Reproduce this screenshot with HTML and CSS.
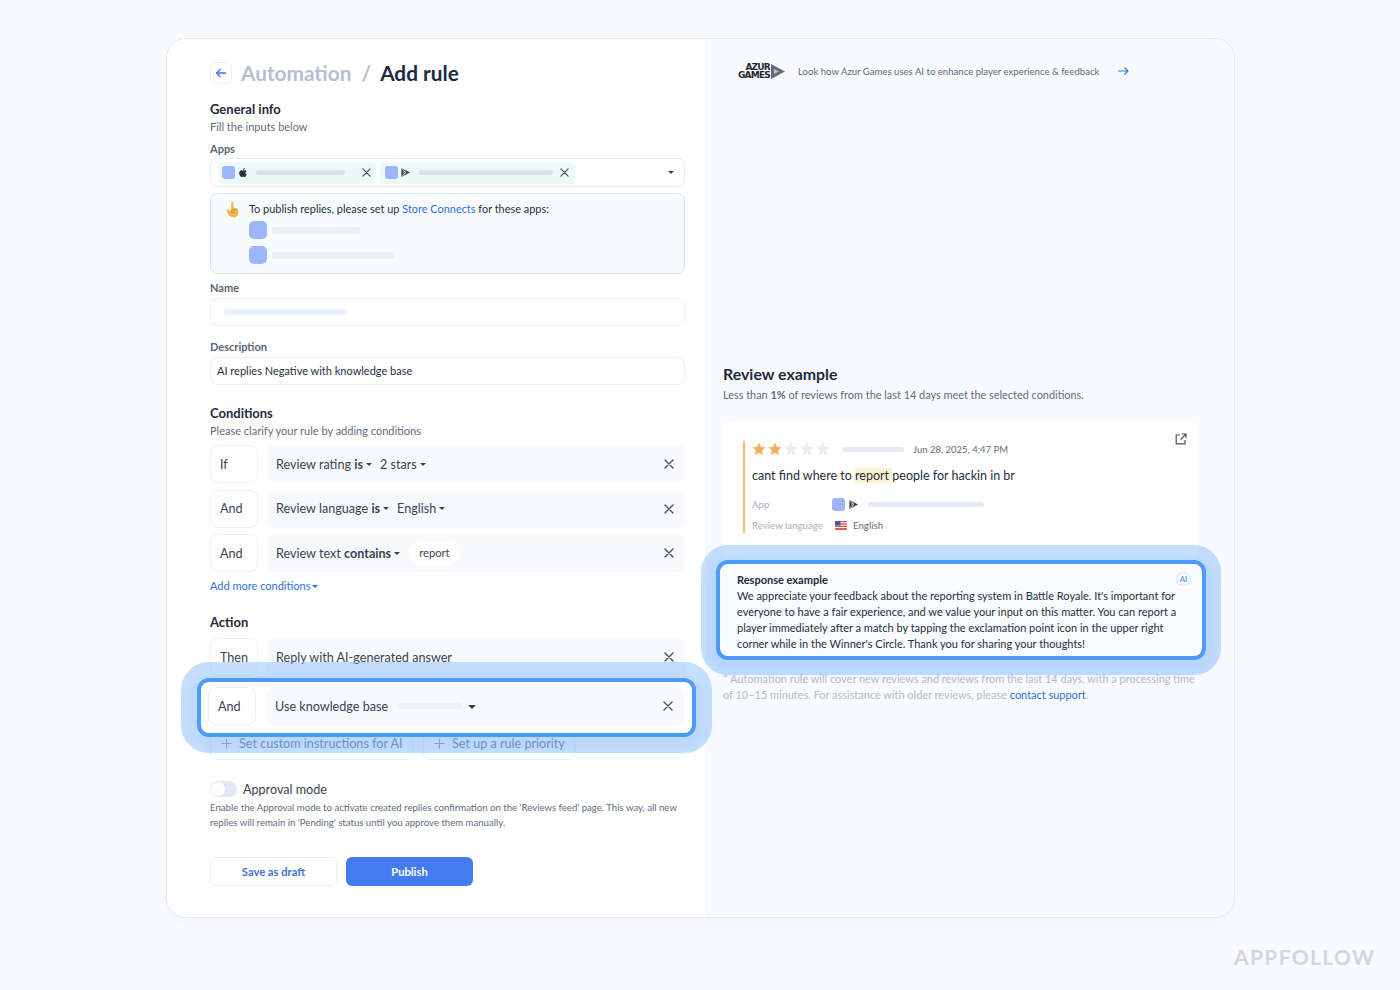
FILE: index.html
```html
<!DOCTYPE html>
<html lang="en">
<head>
<meta charset="utf-8">
<title>Add rule</title>
<link rel="stylesheet" href="styles.css">
</head>
<body>
<svg class="defs" width="0" height="0" aria-hidden="true">
  <symbol id="x" viewBox="0 0 10 10"><path d="M1 1l8 8M9 1l-8 8" fill="none" stroke="currentColor" stroke-width="1.4" stroke-linecap="round"/></symbol>
  <symbol id="star" viewBox="0 0 14 14"><path d="M7 .6l1.95 4.2 4.55.55-3.35 3.1.88 4.5L7 10.7l-4.03 2.25.88-4.5L.5 5.35l4.55-.55z" fill="currentColor"/></symbol>
  <symbol id="play" viewBox="0 0 12 12"><path d="M1.5 1l9.5 5-9.5 5z" fill="#3b4250"/><path d="M1.8 1.4L6.6 6l-4.8 4.6M5.2 4.2L4 6l1.2 1.8" fill="none" stroke="#fff" stroke-width=".8"/></symbol>
  <symbol id="plus" viewBox="0 0 12 12"><path d="M6 .5v11M.5 6h11" fill="none" stroke="currentColor" stroke-width="1.2"/></symbol>
</svg>
<main class="card">
  <section class="left">
    <header class="title">
      <button class="back"><svg width="12" height="12" viewBox="0 0 12 12"><path d="M11 6H1.5M5.5 2L1.5 6l4 4" fill="none" stroke="#3f78e0" stroke-width="1.3"/></svg></button>
      <h1><span class="muted">Automation</span><span class="muted slash">/</span>Add rule</h1>
    </header>
    <h2 class="h-general">General info</h2>
    <p class="sub sub-general">Fill the inputs below</p>
    <label class="lab lab-apps">Apps</label>
    <div class="select">
      <div class="chip chip-a">
        <i class="ico"></i>
        <svg class="apple" width="10" height="11" viewBox="2 2 20 20"><path d="M17.05 20.28c-.98.95-2.05.8-3.08.35-1.09-.46-2.09-.48-3.24 0-1.44.62-2.2.44-3.06-.35C2.79 15.25 3.51 7.59 9.05 7.31c1.35.07 2.29.74 3.08.8 1.18-.24 2.31-.93 3.57-.84 1.51.12 2.65.72 3.4 1.8-3.12 1.87-2.38 5.98.48 7.13-.57 1.5-1.31 2.99-2.54 4.09zM12.03 7.25c-.15-2.23 1.66-4.07 3.74-4.25.29 2.58-2.34 4.5-3.74 4.25z" fill="#2c3240"/></svg>
        <i class="cbar cbar-a"></i>
        <svg class="xi xi-a"><use href="#x"/></svg>
      </div>
      <div class="chip chip-b">
        <i class="ico"></i>
        <svg class="pl"><use href="#play"/></svg>
        <i class="cbar cbar-b"></i>
        <svg class="xi xi-b"><use href="#x"/></svg>
      </div>
      <i class="caret caret-sel"></i>
    </div>
    <div class="notice">
      <svg class="hand" width="14" height="17" viewBox="0 0 14 17"><path d="M6.2 1.4C6.3.3 8.2.3 8.3 1.4l.2 5.3 2.2.3c1.7.2 2.6 1.3 2.5 3l-.2 2.7c-.2 2.2-1.9 3.7-4.3 3.7-2.7 0-4.7-1.3-5.7-3.8L1.6 9.4c-.4-1 .9-1.7 1.6-.9l1.3 1.5 1.5-.8z" fill="#f1b543"/><path d="M5.8 9.4c1.5-.8 3.9-.8 5.4 0M6 11.5c1.1-.6 2.6-.6 3.8-.2" fill="none" stroke="#c0821c" stroke-width=".7"/></svg>
      <div class="notice-body">
        <p class="notice-text">To publish replies, please set up <a class="link">Store Connects</a> for these apps:</p>
        <div class="nrow"><i class="nico"></i><i class="nbar nbar-a"></i></div>
        <div class="nrow nrow-2"><i class="nico"></i><i class="nbar nbar-b"></i></div>
      </div>
    </div>
    <label class="lab lab-name">Name</label>
    <div class="input"><i class="name-bar"></i></div>
    <label class="lab lab-desc">Description</label>
    <div class="input input-text">AI replies Negative with knowledge base</div>

    <h2 class="h-cond">Conditions</h2>
    <p class="sub sub-cond">Please clarify your rule by adding conditions</p>
    <div class="rules">
      <div class="rule"><div class="tag">If</div><div class="rbar"><span>Review rating <b>is</b></span><i class="caret"></i><span class="val">2 stars</span><i class="caret"></i><svg class="rx"><use href="#x"/></svg></div></div>
      <div class="rule"><div class="tag">And</div><div class="rbar"><span>Review language <b>is</b></span><i class="caret"></i><span class="val">English</span><i class="caret"></i><svg class="rx"><use href="#x"/></svg></div></div>
      <div class="rule"><div class="tag">And</div><div class="rbar"><span>Review text <b>contains</b></span><i class="caret"></i><span class="pill">report</span><svg class="rx"><use href="#x"/></svg></div></div>
    </div>
    <a class="more link">Add more conditions<i class="caret caret-blue"></i></a>

    <h2 class="h-action">Action</h2>
    <div class="rule rule-then"><div class="tag">Then</div><div class="rbar"><span>Reply with AI-generated answer</span><svg class="rx"><use href="#x"/></svg></div></div>
    <div class="focus focus-rule">
      <div class="rule"><div class="tag">And</div><div class="rbar"><span>Use knowledge base</span><i class="kb-bar"></i><i class="caret caret-big"></i><svg class="rx"><use href="#x"/></svg></div></div>
    </div>
    <div class="adders">
      <button class="adder adder-a"><svg class="plus"><use href="#plus"/></svg>Set custom instructions for AI</button>
      <button class="adder adder-b"><svg class="plus"><use href="#plus"/></svg>Set up a rule priority</button>
    </div>
    <div class="approval"><span class="toggle"><i></i></span><span>Approval mode</span></div>
    <p class="approval-text">Enable the Approval mode to activate created replies confirmation on the 'Reviews feed' page. This way, all new replies will remain in 'Pending' status until you approve them manually.</p>
    <div class="actions">
      <button class="btn btn-draft">Save as draft</button>
      <button class="btn btn-pub">Publish</button>
    </div>
  </section>

  <section class="right">
    <div class="promo">
      <div class="azur">
        <span class="azur-text">AZUR<br>GAMES</span>
        <svg width="14" height="15" viewBox="0 0 14 15"><path d="M0 0l14 7.5L0 15z" fill="#6a6d74"/><path d="M3 5l5 2.5L3 10z" fill="#b9bbc0"/></svg>
      </div>
      <span class="promo-text">Look how Azur Games uses AI to enhance player experience &amp; feedback</span>
      <svg class="promo-arrow" width="11" height="10" viewBox="0 0 11 10"><path d="M0 5h10M6.5 1.5L10 5 6.5 8.5" fill="none" stroke="#3f78e0" stroke-width="1.2"/></svg>
    </div>
    <h2 class="h-review">Review example</h2>
    <p class="sub sub-review">Less than <b>1%</b> of reviews from the last 14 days meet the selected conditions.</p>
    <article class="review">
      <svg class="ext" width="12" height="12" viewBox="0 0 12 12"><path d="M5 2H1.2v8.8H10V7M6.8 1h4.2v4.2M11 1L5.5 6.5" fill="none" stroke="#4a5568" stroke-width="1.2"/></svg>
      <div class="review-in">
        <div class="meta">
          <span class="stars">
            <svg class="st on"><use href="#star"/></svg><svg class="st on"><use href="#star"/></svg><svg class="st"><use href="#star"/></svg><svg class="st"><use href="#star"/></svg><svg class="st"><use href="#star"/></svg>
          </span>
          <i class="meta-bar"></i>
          <span class="date">Jun 28, 2025, 4:47 PM</span>
        </div>
        <p class="rtext">cant find where to <mark>report </mark>people for hackin in br</p>
        <div class="kv kv-app"><span class="k">App</span><i class="kico"></i><svg class="pl"><use href="#play"/></svg><i class="kbar"></i></div>
        <div class="kv kv-lang"><span class="k">Review language</span>
          <svg class="flag" width="12" height="9" viewBox="0 0 12 9"><rect width="12" height="9" rx="1" fill="#d9534f"/><path d="M0 1.8h12M0 4.2h12M0 6.6h12" stroke="#fff" stroke-width="1"/><rect width="5.5" height="4.6" fill="#3f5aa8"/></svg>
          <span class="lang">English</span></div>
      </div>
    </article>
    <div class="focus focus-resp">
      <span class="ai">AI</span>
      <h3>Response example</h3>
      <p>We appreciate your feedback about the reporting system in Battle Royale. It's important for everyone to have a fair experience, and we value your input on this matter. You can report a player immediately after a match by tapping the exclamation point icon in the upper right corner while in the Winner's Circle. Thank you for sharing your thoughts!</p>
    </div>
    <p class="foot">* Automation rule will cover new reviews and reviews from the last 14 days, with a processing time of 10–15 minutes. For assistance with older reviews, please <a class="link">contact support</a>.</p>
  </section>
</main>
<div class="brand">APPFOLLOW</div>
</body>
</html>
```
FILE: styles.css
```css
* { box-sizing: border-box; }
html, body { margin: 0; height: 990px; overflow: hidden; }
body { background: #f9fafd; padding: 38px 0 0 166px; font-family: Lato, "Liberation Sans", sans-serif; color: #1f2a3d; position: relative; }
h1, h2, h3, p { margin: 0; }
i { display: block; font-style: normal; }
button { font-family: inherit; }
.defs { position: absolute; }
.card { width: 1069px; height: 880px; display: flex; background: #fff; border: 1px solid #e3e9f3; border-radius: 20px; overflow: visible; box-shadow: 0 6px 24px rgba(60, 90, 140, .04); }
.left { width: 538px; padding: 23px 20px 0 43px; background: #fff; border-radius: 20px 0 0 20px; }
.right { width: 529px; padding: 20px 36px 0 18px; background: #f8faff; border-radius: 0 20px 20px 0; }

.title { display: flex; align-items: center; gap: 9px; height: 22px; }
.back { width: 22px; height: 22px; border: 1px solid #edf0f6; border-radius: 6px; background: #fff; display: flex; align-items: center; justify-content: center; padding: 0; }
h1 { font-size: 20.8px; font-weight: 700; line-height: 26px; color: #1d2a44; white-space: nowrap; }
.muted { color: #b4bfd2; }
.slash { margin: 0 9px 0 10px; }

h2 { font-size: 13px; font-weight: 700; line-height: 18px; color: #1f2a3d; }
.sub { font-size: 11px; line-height: 16px; color: #5f6b7e; }
.lab { display: block; font-size: 11px; line-height: 16px; color: #5a6678; font-weight: 700; }
.link { color: #2f6fdb; }

.h-general { margin-top: 16px; }
.sub-general { margin-top: 1px; }
.lab-apps { margin-top: 6px; }

.select { margin-top: 1px; height: 29px; border: 1px solid #e9edf4; border-radius: 7px; display: flex; align-items: center; padding-left: 7px; position: relative; }
.chip { height: 22px; display: flex; align-items: center; background: #edf8f8; border-radius: 4px; }
.chip-a { width: 158px; padding-left: 4px; }
.chip-b { width: 195px; padding-left: 5px; margin-left: 4px; }
.ico { width: 13px; height: 13px; border-radius: 3px; background: #9db6fb; flex: none; }
.apple { margin-left: 3px; flex: none; }
.pl { width: 11px; height: 11px; margin-left: 2px; flex: none; }
.cbar { height: 5px; border-radius: 3px; background: #d8e5e8; flex: none; }
.cbar-a { width: 89px; margin-left: 8px; }
.cbar-b { width: 134px; margin-left: 8px; }
.xi { width: 9px; height: 9px; color: #4a5464; flex: none; }
.xi-a { margin-left: 17px; }
.xi-b { margin-left: 7px; }
.caret { width: 0; height: 0; border: 3px solid transparent; border-top: 3.5px solid #3a4456; border-bottom: 0; margin-left: 3px; }
.caret-sel { position: absolute; right: 10px; top: 12px; }
.caret-blue { display: inline-block; border-top-color: #2f6fdb; vertical-align: 2px; margin-left: 2px; }
.caret-big { border-width: 4px; border-bottom: 0; border-top-color: #2f3a4c; margin: 2px 0 0 6px; }

.notice { margin-top: 6px; height: 81px; border: 1px solid #cfeae4; border-radius: 7px; background: #f8fbfe; display: flex; padding: 7px 0 0 14px; }
.hand { flex: none; }
.notice-body { margin-left: 10px; }
.notice-text { font-size: 10.93px; line-height: 16px; color: #252f40; }
.nrow { display: flex; align-items: center; margin-top: 4px; }
.nrow-2 { margin-top: 7px; }
.nico { width: 18px; height: 18px; border-radius: 5px; background: #9db6fb; }
.nbar { height: 7px; border-radius: 3px; background: #ebf0f9; margin-left: 5px; }
.nbar-a { width: 88px; }
.nbar-b { width: 123px; }

.lab-name { margin-top: 6px; }
.input { margin-top: 2px; height: 28px; border: 1.5px solid #edf0f5; border-radius: 7px; display: flex; align-items: center; padding-left: 6px; font-size: 11px; color: #252f40; }
.input-text { padding-bottom: 2px; }
.name-bar { width: 122px; height: 6px; border-radius: 3px; background: #e6effb; margin-left: 7px; }
.lab-desc { margin-top: 13px; }

.h-cond { margin-top: 19px; }
.sub-cond { margin-top: 1px; }
.rules { margin-top: 6px; display: flex; flex-direction: column; gap: 6.5px; }
.rule { display: flex; height: 38px; gap: 9px; font-size: 12.6px; color: #3a4456; }
.tag { width: 48px; flex: none; border: 1.5px solid #eef1f6; border-radius: 8px; background: #fff; display: flex; align-items: center; padding-left: 9px; }
.rbar { flex: 1; background: #f7f9fc; border-radius: 8px; display: flex; align-items: center; padding-left: 9px; position: relative; }
.rbar b { font-weight: 700; }
.val { margin-left: 8px; }
.rx { position: absolute; right: 11px; top: 14px; width: 10px; height: 10px; color: #4a5464; }
.pill { margin-left: 9px; height: 24px; padding: 0 10px; border-radius: 12px; background: #fff; font-size: 11.2px; line-height: 24px; }
.more { display: block; margin-top: 6px; font-size: 11px; line-height: 16px; }
.h-action { margin-top: 19px; }
.rule-then { margin-top: 7px; }

.focus { position: relative; z-index: 1; background: #fff; border: 4px solid #4c9bf6; border-radius: 12px; }
.focus-rule { margin: 2px -11px -8px -13px; padding: 5px 8px 8px 7px; box-shadow: 0 0 0 16px rgba(122, 179, 251, .42), 0 6px 10px 8px rgba(122, 179, 251, .16); }
.focus-rule .rule { gap: 10px; }
.kb-bar { width: 65px; height: 6px; border-radius: 3px; background: #edf2fa; margin-left: 9px; }

.adders { display: flex; gap: 10px; }
.adder { height: 31px; border: 1px solid #eef1f6; border-radius: 7px; background: #fff; font-size: 12.6px; color: #5f6b7e; display: flex; align-items: center; padding: 0 10px 2px; white-space: nowrap; }
.adder-a { width: 203px; }
.adder-b { width: 152px; }
.plus { width: 11px; height: 11px; color: #8793a6; margin-right: 7px; flex: none; }

.approval { margin-top: 20px; height: 18px; display: flex; align-items: center; gap: 6px; font-size: 12.6px; color: #3a4456; }
.toggle { width: 27px; height: 16px; border-radius: 8px; background: #dfe8f6; padding: 1px; }
.toggle i { width: 14px; height: 14px; border-radius: 50%; background: #fff; }
.approval-text { margin-top: 2px; font-size: 9.6px; line-height: 15px; color: #5f6b7e; }
.actions { margin-top: 27px; display: flex; gap: 9px; }
.btn { width: 127px; height: 29px; border-radius: 6px; font-size: 11.2px; font-weight: 700; padding: 0; }
.btn-draft { background: #fff; border: 1px solid #edf0f5; color: #3f71d8; }
.btn-pub { background: #447bf0; border: 0; color: #fff; }

.promo { display: flex; align-items: center; height: 24px; margin-left: 15px; }
.azur { display: flex; align-items: center; width: 60px; gap: 1px; }
.azur-text { font-family: "DejaVu Sans", sans-serif; font-weight: 700; font-size: 9px; line-height: 8px; text-align: right; color: #23262d; letter-spacing: -.8px; }
.promo-text { font-size: 9.58px; color: #5f6b7e; }
.promo-arrow { margin-left: 19px; }

.h-review { margin-top: 282px; font-size: 15.9px; }
.sub-review { margin-top: 4px; font-size: 10.9px; }
.sub-review b { font-weight: 700; }
.review { position: relative; margin-top: 18px; height: 139px; background: #fff; border-radius: 8px; padding: 20px 0 0 20px; }
.ext { position: absolute; right: 11px; top: 12px; }
.review-in { border-left: 2px solid #f2bd72; padding-left: 7px; height: 92px; }
.meta { display: flex; align-items: center; height: 16px; }
.stars { display: flex; gap: 2px; }
.st { width: 14px; height: 14px; color: #e6edf7; }
.st.on { color: #f2b15e; }
.meta-bar { width: 62px; height: 5px; border-radius: 3px; background: #e4ebf7; margin-left: 12px; }
.date { margin-left: 9px; font-size: 9.5px; color: #5f6b7e; }
.rtext { margin-top: 9px; font-size: 12.5px; line-height: 20px; color: #252f40; }
mark { background: #fcf2cf; color: inherit; }
.kv { display: flex; align-items: center; height: 16px; font-size: 9.7px; }
.kv-app { margin-top: 10px; }
.kv-lang { margin-top: 5px; }
.k { width: 80px; color: #a6b0c2; }
.kico { width: 13px; height: 13px; border-radius: 3px; background: #9db6fb; }
.kv .pl { margin-left: 3px; }
.kbar { width: 116px; height: 5px; border-radius: 3px; background: #e4ebf7; margin-left: 9px; }
.flag { margin-left: 3px; }
.lang { margin-left: 6px; color: #5f6b7e; }

.focus-resp { margin: 0 -8px 0 -7px; height: 100px; padding: 8px 17px 0 17px; background: #f9fbff; box-shadow: 0 0 0 15px rgba(122, 179, 251, .42), 0 6px 10px 7px rgba(122, 179, 251, .16); }
.focus-resp h3 { font-size: 11px; line-height: 16px; font-weight: 700; color: #1f2a3d; }
.focus-resp p { font-size: 11px; line-height: 16px; color: #252f40; }
.ai { position: absolute; right: 11px; top: 8px; width: 15px; height: 14px; border: 1px solid #d6e6fb; border-radius: 50%; font-size: 8px; line-height: 12px; text-align: center; color: #4a84e0; }
.foot { margin-top: 11px; font-size: 10.95px; line-height: 16px; color: #b3bdcc; }

.brand { position: absolute; left: 1234px; top: 943px; font-size: 21px; font-weight: 700; line-height: 28px; letter-spacing: 1.35px; color: #d3d6db; }
```
